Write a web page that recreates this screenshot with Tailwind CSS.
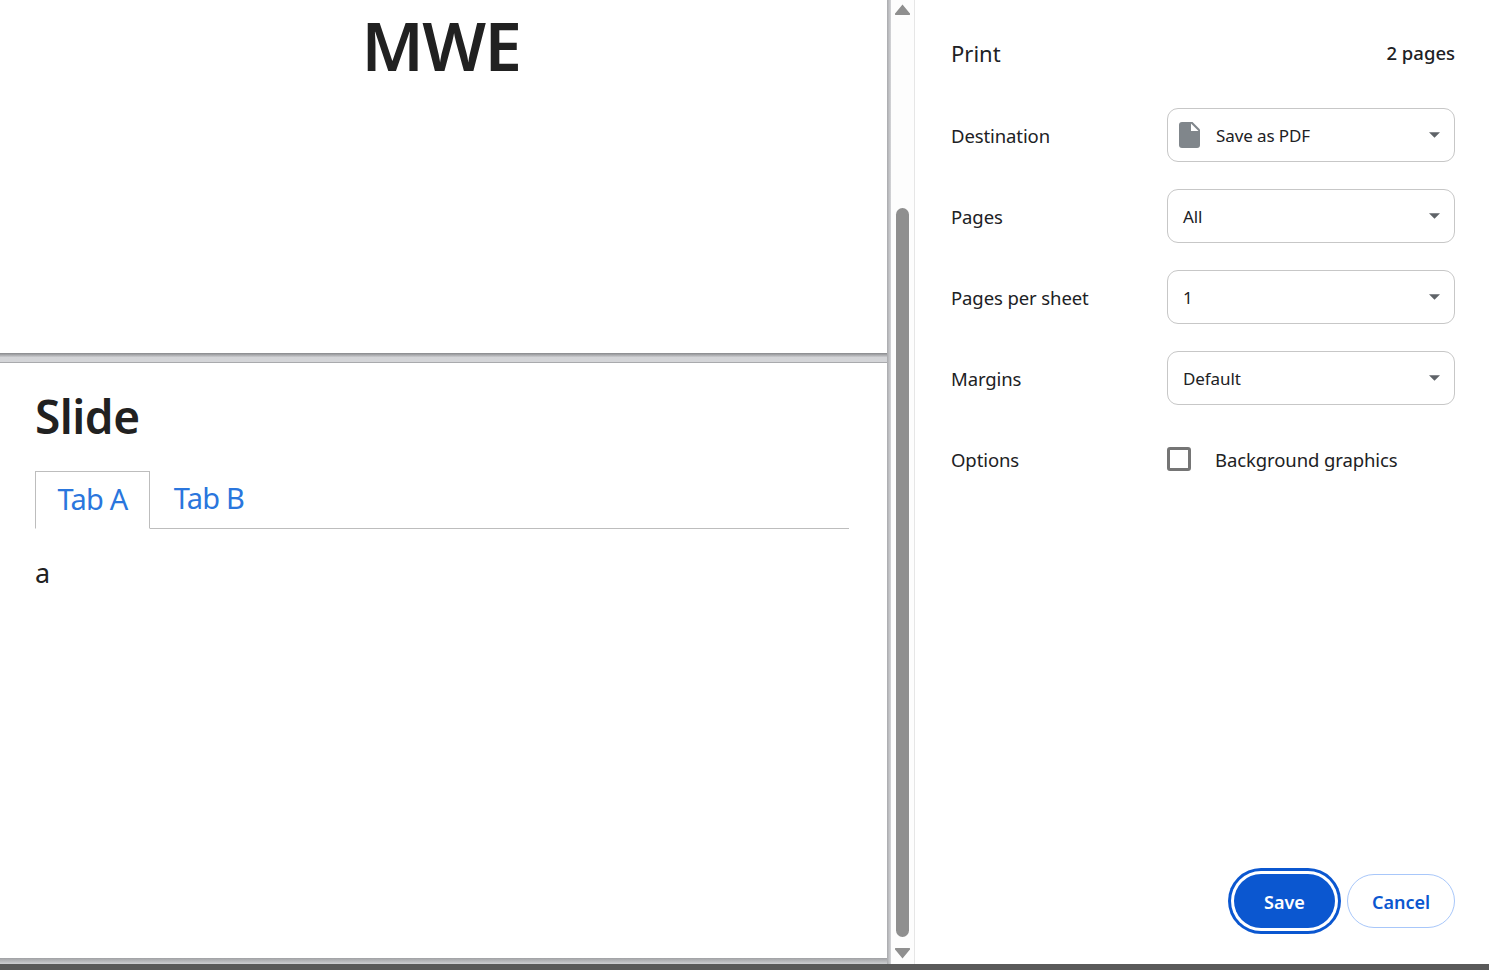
<!DOCTYPE html>
<html lang="en">
<head>
<meta charset="UTF-8">
<title>Print</title>
<script src="https://cdn.jsdelivr.net/npm/@tailwindcss/browser@4"></script>
</head>
<body class="h-[970px] w-[1489px] overflow-hidden bg-white font-['Noto_Sans',sans-serif] text-[#202124]">
  <div class="flex h-[964px]">
    <!-- preview pages -->
    <main class="flex h-full w-[887px] flex-col bg-[#d4d5d8]">
      <section class="h-[353px] w-full bg-white text-center">
        <h1 class="pt-[3px] pr-[5px] text-[67px] leading-[84px] font-semibold tracking-[-1.5px] text-[#212121]">MWE</h1>
      </section>
      <div class="h-[10px] w-full border-b border-[#a9aaad] bg-gradient-to-b from-[#88898c] via-[#d4d5d8] to-[#d4d5d8]"></div>
      <section class="h-[595px] w-full bg-white px-[35px]">
        <h2 class="pt-[23px] text-[46px] leading-[60px] font-semibold tracking-[-0.5px] text-[#212121]">Slide</h2>
        <div class="mt-[25px] flex h-[58px] w-[814px] border-b border-[#bdbdbd] text-[29px] text-[#2a76dd]">
          <div class="-mb-px flex h-[58px] w-[115px] items-center justify-center border border-b-white border-[#bdbdbd] bg-white pb-[3px] tracking-[-0.8px]">Tab A</div>
          <div class="flex h-[57px] w-[118px] items-center justify-center pb-[3px] tracking-[-0.8px]">Tab B</div>
        </div>
        <p class="mt-[24px] text-[27px] leading-[40px] text-[#212121]">a</p>
      </section>
      <div class="h-[6px] w-full bg-gradient-to-b from-[#a0a1a4] to-[#cfd0d3]"></div>
    </main>
    <div class="h-full w-[4px] bg-gradient-to-r from-[#a9aaad] to-[#d4d5d8]"></div>

    <!-- scrollbar -->
    <div class="flex h-full w-[24px] flex-col items-center border-r border-[#e6e6e6] bg-[#fdfdfd] pr-px">
      <svg class="mt-[4px] h-[11px] w-[15px]" viewBox="0 0 15 11"><path d="M7.5 .5 14.5 9a1 1 0 0 1-1 2h-12a1 1 0 0 1-1-2Z" fill="#8f8f8f"/></svg>
      <div class="mt-[193px] h-[729px] w-[13px] rounded-full bg-[#8f8f8f]"></div>
      <svg class="mt-[11px] h-[11px] w-[15px]" viewBox="0 0 15 11"><path d="M7.5 10.5 14.5 2a1 1 0 0 0-1-2h-12a1 1 0 0 0-1 2Z" fill="#8f8f8f"/></svg>
    </div>

    <!-- settings sidebar -->
    <aside class="flex h-full flex-1 flex-col pr-[34px] pl-[36px]">
      <header class="flex h-[108px] items-center justify-between">
        <h3 class="pb-[2px] text-[22px] font-normal">Print</h3>
        <span class="pb-[2px] text-[18.5px] font-medium">2 pages</span>
      </header>

      <div class="flex flex-col gap-[27px] text-[18.5px] tracking-[-0.1px]">
        <div class="flex h-[54px] items-center justify-between">
          <span class="pt-[2px]">Destination</span>
          <div class="flex h-[54px] w-[288px] items-center rounded-[11px] border border-[#c7c7c7] pr-[14px] pl-[11px] text-[17px]">
            <svg class="h-[26px] w-[21px]" viewBox="0 0 21 26"><path d="M3 0h10.5L21 7.5V23a3 3 0 0 1-3 3H3a3 3 0 0 1-3-3V3a3 3 0 0 1 3-3Z" fill="#80868b"/><path d="M12 1.5 19.5 9H12Z" fill="#fff"/></svg>
            <span class="ml-[16px] flex-1 pt-[2px]">Save as PDF</span>
            <svg class="h-[6px] w-[11px]" viewBox="0 0 12 6"><path d="M0 0h12L6 6Z" fill="#5f6368"/></svg>
          </div>
        </div>
        <div class="flex h-[54px] items-center justify-between">
          <span class="pt-[2px]">Pages</span>
          <div class="flex h-[54px] w-[288px] items-center justify-between rounded-[11px] border border-[#c7c7c7] pr-[14px] pl-[15px] text-[17px]">
            <span class="pt-[2px]">All</span>
            <svg class="h-[6px] w-[11px]" viewBox="0 0 12 6"><path d="M0 0h12L6 6Z" fill="#5f6368"/></svg>
          </div>
        </div>
        <div class="flex h-[54px] items-center justify-between">
          <span class="pt-[2px]">Pages per sheet</span>
          <div class="flex h-[54px] w-[288px] items-center justify-between rounded-[11px] border border-[#c7c7c7] pr-[14px] pl-[15px] text-[17px]">
            <span class="pt-[2px]">1</span>
            <svg class="h-[6px] w-[11px]" viewBox="0 0 12 6"><path d="M0 0h12L6 6Z" fill="#5f6368"/></svg>
          </div>
        </div>
        <div class="flex h-[54px] items-center justify-between">
          <span class="pt-[2px]">Margins</span>
          <div class="flex h-[54px] w-[288px] items-center justify-between rounded-[11px] border border-[#c7c7c7] pr-[14px] pl-[15px] text-[17px]">
            <span class="pt-[2px]">Default</span>
            <svg class="h-[6px] w-[11px]" viewBox="0 0 12 6"><path d="M0 0h12L6 6Z" fill="#5f6368"/></svg>
          </div>
        </div>
        <div class="flex h-[54px] items-center justify-between">
          <span class="pt-[2px]">Options</span>
          <div class="flex w-[288px] items-center">
            <div class="h-[24px] w-[24px] rounded-[3px] border-[3px] border-[#757575]"></div>
            <span class="ml-[24px] pt-[2px]">Background graphics</span>
          </div>
        </div>
      </div>

      <div class="mt-auto mb-[36px] flex justify-end gap-[12px] text-[18px] font-semibold">
        <button class="h-[54px] w-[101px] rounded-full bg-[#0b57d0] pt-[2px] text-white shadow-[0_0_0_3px_#fff,0_0_0_6px_#0b57d0]">Save</button>
        <button class="h-[54px] w-[108px] rounded-full border border-[#a8c7fa] pt-[2px] text-[#0b57d0]">Cancel</button>
      </div>
    </aside>
  </div>
  <div class="h-[6px] w-full bg-[#5a5a5a]"></div>
</body>
</html>
